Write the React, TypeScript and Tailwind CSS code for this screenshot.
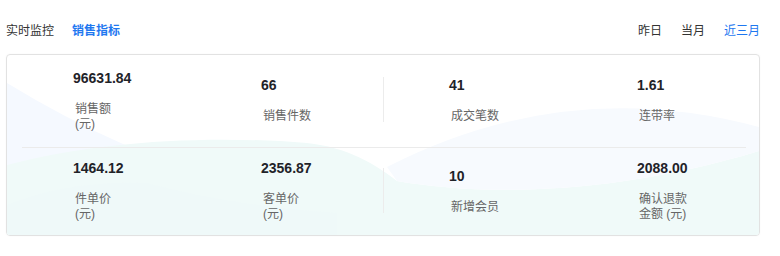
import React from "react";

type Metric = {
    value: string;
    label: string[];
};

const TOP: Metric[] = [
    { value: "96631.84", label: ["销售额", "(元)"] },
    { value: "66", label: ["销售件数"] },
    { value: "41", label: ["成交笔数"] },
    { value: "1.61", label: ["连带率"] },
];

const BOTTOM: Metric[] = [
    { value: "1464.12", label: ["件单价", "(元)"] },
    { value: "2356.87", label: ["客单价", "(元)"] },
    { value: "10", label: ["新增会员"] },
    { value: "2088.00", label: ["确认退款", "金额 (元)"] },
];

const MetricItem = ({ value, label }: Metric) => {
    return (
        <div className="pl-[66px]">
            <div className="text-[14px] leading-[20px] font-bold text-[#1f2329]">{value}</div>
            <div className="mt-[14px] ml-[2px] text-[12px] leading-[15px] text-[#666666]">
                {label.map((l) => (
                    <div key={l}>{l}</div>
                ))}
            </div>
        </div>
    );
};

const MetricRow = ({ items, className }: { items: Metric[]; className: string }) => {
    return (
        <div className={"grid grid-cols-4 pb-[3px] " + className}>
            {items.map((m, i) => (
                <div key={m.value} className="flex items-center">
                    {i === 2 ? (
                        <div className="w-full border-l border-[#ececec] flex items-center h-[45px]">
                            <div className="-ml-px">
                                <MetricItem {...m} />
                            </div>
                        </div>
                    ) : (
                        <MetricItem {...m} />
                    )}
                </div>
            ))}
        </div>
    );
};

// soft waves behind the numbers
const WaveBg = () => (
    <svg className="absolute inset-0 w-full h-full" viewBox="0 0 752 180" preserveAspectRatio="none">
        <path d="M0 28 Q 150 120 330 158 L 330 180 L 0 180 Z" fill="#f5f9ff" />
        <path d="M0 110 C 90 86 200 80 300 88 C 340 92 370 110 390 126 C 470 140 600 142 752 96 L 752 180 L 0 180 Z" fill="#f0faf9" />
        <path d="M380 112 Q 560 20 752 72 L 752 96 C 600 142 470 140 390 126 Z" fill="#f7fafe" />
        <path d="M0 150 Q 60 125 140 128 Q 220 150 330 158 L 330 180 L 0 180 Z" fill="#eff9f9" />
    </svg>
);

export default function App() {
    return (
        <div
            className="w-[780px] h-[256px] bg-white pl-[6px] pr-[20px] pt-[20px]"
            style={{ fontFamily: '"Liberation Sans", "Noto Sans CJK SC", sans-serif' }}
        >
            <div className="flex items-center justify-between h-[22px] text-[12px]">
                <div className="flex gap-[18px]">
                    <span className="text-[#333333]">实时监控</span>
                    <span className="text-[#1f78f0] font-bold">销售指标</span>
                </div>
                <div className="flex gap-[19px]">
                    <span className="text-[#333333]">昨日</span>
                    <span className="text-[#333333]">当月</span>
                    <span className="text-[#1f78f0]">近三月</span>
                </div>
            </div>
            <div className="relative mt-[12px] h-[182px] border border-[#e2e2e2] rounded-[4px] overflow-hidden shadow-[0_0_2px_rgba(0,0,0,0.04)]">
                <WaveBg />
                <div className="relative flex flex-col h-full">
                    <MetricRow items={TOP} className="h-[92px]" />
                    <div className="ml-[15px] mr-[13px] border-t border-[#ebebeb]" />
                    <MetricRow items={BOTTOM} className="flex-1" />
                </div>
            </div>
        </div>
    );
}
